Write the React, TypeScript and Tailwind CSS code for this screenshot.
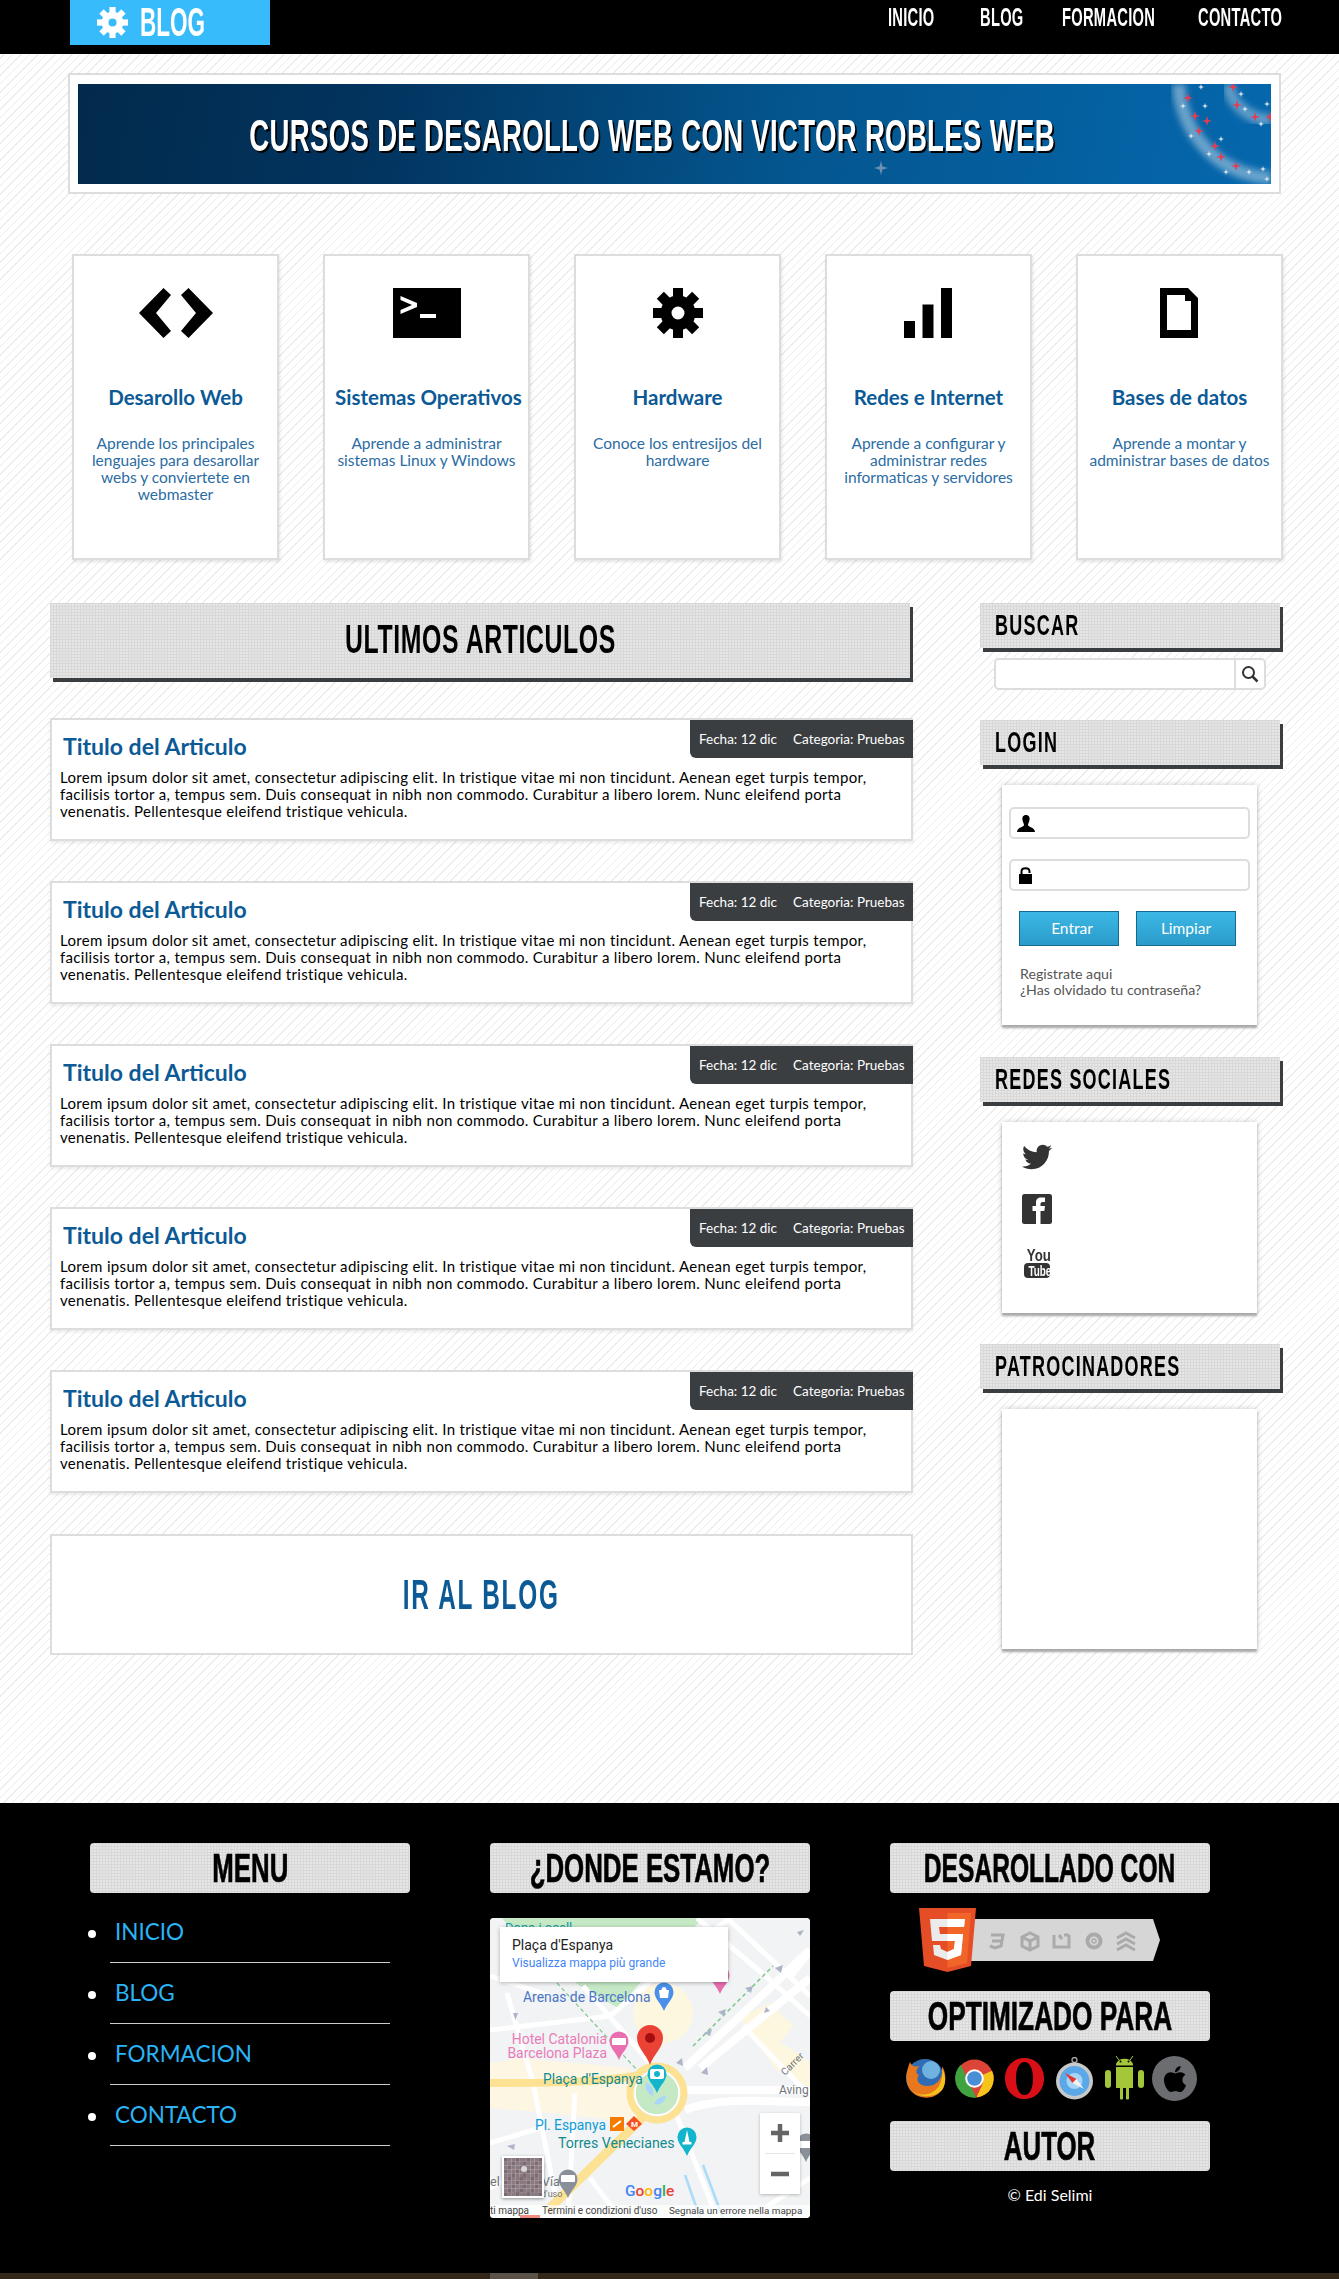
import React from 'react';
import { FaTwitter, FaApple } from 'react-icons/fa';

const bebas = "[font-family:'Liberation_Sans',sans-serif] font-bold";
const dots = 'bg-[#e6e6e6] bg-[linear-gradient(#d8d8d8_1px,transparent_1px),linear-gradient(90deg,#d8d8d8_1px,transparent_1px)] bg-[size:3px_3px]';
const lorem = 'Lorem ipsum dolor sit amet, consectetur adipiscing elit. In tristique vitae mi non tincidunt. Aenean eget turpis tempor, facilisis tortor a, tempus sem. Duis consequat in nibh non commodo. Curabitur a libero lorem. Nunc eleifend porta venenatis. Pellentesque eleifend tristique vehicula.';

const Gear = ({ size, color }: { size: number; color: string }) => (
  <svg width={size} height={size} viewBox="0 0 50 50">
    <circle cx="25" cy="25" r="12" fill="none" stroke={color} strokeWidth="11" />
    {[0, 45, 90, 135, 180, 225, 270, 315].map((a) => (
      <rect key={a} x="20" y="0" width="10" height="10" fill={color} transform={`rotate(${a} 25 25)`} />
    ))}
  </svg>
);

const CodeIcon = () => (
  <svg width="74" height="50" viewBox="0 0 74 50">
    <polygon points="0,25 24.5,0 32,7 17,25 32,43 24.5,50" />
    <polygon points="74,25 49.5,0 42,7 57,25 42,43 49.5,50" />
  </svg>
);

const TerminalIcon = () => (
  <svg width="68" height="50" viewBox="0 0 68 50">
    <rect width="68" height="50" />
    <polygon points="7.5,8 24,15 24,19 7.5,26 7.5,22 19,17 7.5,12" fill="#fff" />
    <rect x="27" y="26" width="16" height="4" fill="#fff" />
  </svg>
);

const SignalIcon = () => (
  <svg width="50" height="50" viewBox="0 0 50 50">
    <rect x="0" y="33" width="11" height="17" />
    <rect x="18.5" y="16.5" width="11" height="33.5" />
    <rect x="37" y="0" width="11" height="50" />
  </svg>
);

const FileIcon = () => (
  <svg width="40" height="50" viewBox="0 0 40 50">
    <path fillRule="evenodd" d="M0 0H28L38 10V50H0ZM7 7V42H31V13H25V7Z" />
  </svg>
);

const topics = [
  { title: 'Desarollo Web', text: 'Aprende los principales lenguajes para desarollar webs y conviertete en webmaster', icon: <CodeIcon /> },
  { title: 'Sistemas Operativos', text: 'Aprende a administrar sistemas Linux y Windows', icon: <TerminalIcon /> },
  { title: 'Hardware', text: 'Conoce los entresijos del hardware', icon: <Gear size={50} color="#000" /> },
  { title: 'Redes e Internet', text: 'Aprende a configurar y administrar redes informaticas y servidores', icon: <SignalIcon /> },
  { title: 'Bases de datos', text: 'Aprende a montar y administrar bases de datos', icon: <FileIcon /> },
];

const SideTitle = ({ children, className = '' }: { children: React.ReactNode; className?: string }) => (
  <div className={`${dots} ${bebas} h-[45px] w-[300px] pl-[15px] text-[29px] leading-[45px] tracking-[2px] text-black shadow-[3px_4px_0_#3b3e41] ${className}`}>
    <span className="inline-block origin-left scale-x-[0.62] whitespace-nowrap">{children}</span>
  </div>
);

const FootTitle = ({ children, className = '', squeeze = 'scale-x-[0.63]' }: { children: React.ReactNode; className?: string; squeeze?: string }) => (
  <div className={`${dots} ${bebas} flex h-[50px] w-[320px] justify-center rounded text-[41px] leading-[50px] text-black [-webkit-text-stroke:0.7px_#000] ${className}`}>
    <span className={`shrink-0 whitespace-nowrap ${squeeze}`}>{children}</span>
  </div>
);

const Article = () => (
  <div className="relative mt-10 h-[123px] w-[863px] border-2 border-[#ddd] bg-white pl-2 shadow-[0_2px_3px_rgba(0,0,0,0.08)]">
    <div className="absolute right-[-2px] top-0 flex h-[38px] w-[223px] items-center gap-[16px] rounded-bl-md bg-[#3b3e41] pl-[9px] text-[13.5px] text-white">
      <span>Fecha: 12 dic</span>
      <span>Categoria: Pruebas</span>
    </div>
    <h2 className="pl-[3px] pt-[12px] text-[23px] font-bold leading-[28px] text-[#0b5a96]">Titulo del Articulo</h2>
    <p className="mt-[9px] w-[825px] text-[15px] leading-[17px] tracking-[0.33px] text-black">{lorem}</p>
  </div>
);

const Banner = () => (
  <div className="relative h-[100px] overflow-hidden bg-[linear-gradient(100deg,#022a4c_0%,#02345f_25%,#04568f_60%,#0567ad_100%)]">
    <svg className="absolute right-0 top-0" width="100" height="100" viewBox="0 0 100 100">
      <defs>
        <filter id="glow"><feGaussianBlur stdDeviation="3" /></filter>
      </defs>
      <path d="M8 0C8 40 40 90 100 94" fill="none" stroke="#fff" strokeOpacity="0.4" strokeWidth="13" filter="url(#glow)" />
      <path d="M58 0C58 20 80 36 100 36" fill="none" stroke="#fff" strokeOpacity="0.35" strokeWidth="12" filter="url(#glow)" />
      {[[17, 14], [24, 32], [36, 37], [28, 47], [44, 62], [50, 73], [65, 82], [62, 3], [66, 21], [84, 33], [99, 33]].map(([x, y], i) => (
        <path key={i} d={`M${x} ${y - 5}L${x + 1.1} ${y - 1.1}L${x + 5} ${y}L${x + 1.1} ${y + 1.1}L${x} ${y + 5}L${x - 1.1} ${y + 1.1}L${x - 5} ${y}L${x - 1.1} ${y - 1.1}Z`} fill="#e83a52" />
      ))}
      {[[30, 3], [12, 22], [34, 22], [20, 52], [50, 55], [38, 70], [55, 88], [78, 88], [92, 85], [96, 95], [70, 10], [74, 25], [90, 40], [96, 20]].map(([x, y], i) => (
        <path key={i} d={`M${x} ${y - 3}L${x + 0.7} ${y - 0.7}L${x + 3} ${y}L${x + 0.7} ${y + 0.7}L${x} ${y + 3}L${x - 0.7} ${y + 0.7}L${x - 3} ${y}L${x - 0.7} ${y - 0.7}Z`} fill="#dfe8f2" />
      ))}
    </svg>
    <svg className="absolute left-[796px] top-[77px]" width="14" height="14" viewBox="0 0 14 14">
      <path d="M7 0L8.5 5.5L14 7L8.5 8.5L7 14L5.5 8.5L0 7L5.5 5.5Z" fill="#6f8fb2" />
    </svg>
    <div className={`${bebas} relative flex h-full items-center justify-center pr-[44px] pt-[4px] text-[45px] tracking-[0.5px] text-white`}>
      <span className="shrink-0 scale-x-[0.613] whitespace-nowrap [text-shadow:3px_2px_0_#000]">CURSOS DE DESAROLLO WEB CON VICTOR ROBLES WEB</span>
    </div>
  </div>
);

const Pin = ({ x, y, color, r = 9.5 }: { x: number; y: number; color: string; r?: number }) => (
  <path d={`M${x} ${y}C${x - 3} ${y - 8} ${x - r} ${y - 12} ${x - r} ${y - 19}A${r} ${r} 0 1 1 ${x + r} ${y - 19}C${x + r} ${y - 12} ${x + 3} ${y - 8} ${x} ${y}Z`} fill={color} />
);

const MapBase = () => (
  <svg width="320" height="300" viewBox="0 0 320 300" className="block [font-family:'Roboto',sans-serif]">
    <rect width="320" height="300" fill="#f1f3f4" />
    <polygon points="12,0 213,0 175,40 150,65 128,90 90,68 30,20" fill="#c5e8c5" />
    <circle cx="173" cy="95" r="30" fill="#fef7e0" />
    <polygon points="250,100 280,85 303,108 290,125 300,130 320,145 320,170 285,150" fill="#fef7e0" />
    <polygon points="0,145 30,140 140,150 150,205 60,195 0,190" fill="#fdf6e3" />
    <g fill="none" stroke="#fff" strokeWidth="5">
      <path d="M207 0L280 62L320 98" />
      <path d="M237 0L320 78" />
      <path d="M0 58L60 78" />
      <path d="M17 75L43 165L70 300" />
      <path d="M93 68L160 145" />
      <path d="M0 112L120 98L200 30L240 0" />
      <path d="M253 108L320 178" />
      <path d="M187 198L227 300" />
      <path d="M0 225L50 210" />
      <path d="M0 270L60 240" />
      <path d="M85 175L78 300" />
      <path d="M130 300L100 260" />
      <path d="M260 300L320 260" />
      <path d="M300 60L320 35" />
    </g>
    <g fill="none" stroke="#fff" strokeWidth="8">
      <path d="M195 150L320 32" />
      <path d="M210 150L320 60" />
      <path d="M195 172H320" />
      <path d="M195 192C230 178 280 184 320 184" />
    </g>
    <path d="M203 128L283 48" fill="none" stroke="#7cc68a" strokeWidth="1.5" strokeDasharray="4 3" />
    <path d="M67 65L147 152" fill="none" stroke="#7cc68a" strokeWidth="1.2" strokeDasharray="4 3" />
    <g stroke="#fde293" fill="none" strokeLinecap="round">
      <path d="M0 165C50 165 100 165 145 158" strokeWidth="8" />
      <path d="M150 202L60 290" strokeWidth="9" />
      <circle cx="167" cy="175" r="27" strokeWidth="7" />
    </g>
    <circle cx="167" cy="175" r="22" fill="#c5e8c5" stroke="#fff" strokeWidth="1.5" />
    <path d="M156 165C162 166 164 172 163 178C158 176 155 171 156 165ZM176 178C172 178 166 181 164 186C170 188 175 184 176 178Z" fill="#a8d5fb" />
    <path d="M195 257L210 300M213 247L233 300" stroke="#aadafc" strokeWidth="2.5" />
    <g fill="#aeb4c8">
      <polygon points="23,95 28,95 25.5,102" />
      <polygon points="285,50 293,47 291,55" />
      <polygon points="307,14 314,12 310,18" />
      <polygon points="255,70 263,68 261,75" />
      <polygon points="228,94 236,91 234,98" />
      <polygon points="214,115 222,111 220,118" />
      <polygon points="280,93 274,95 276,89" />
      <polygon points="186,145 192,140 193,148" />
      <polygon points="211,155 217,149 218,157" />
      <polygon points="17,228 25,226 24,232" />
    </g>
    <text x="15" y="14" fontSize="13" fill="#129aa0">Dona i ocell</text>
    <Pin x={230} y={76} color="#e96fb0" />
    <Pin x={174} y={93} color="#4a90e8" />
    <path d="M169 72H179L178 80H170ZM171.5 72C171.5 68 176.5 68 176.5 72" fill="#fff" />
    <text x="33" y="84" fontSize="13.9" fill="#4a76c8">Arenas de Barcelona</text>
    <Pin x={129} y={142} color="#e96fb0" />
    <rect x="122" y="120" width="14" height="7" rx="1" fill="#fff" />
    <text x="117" y="126" fontSize="13.9" textAnchor="end" fill="#ea7bb8">Hotel Catalonia</text>
    <text x="117" y="140" fontSize="13.9" textAnchor="end" fill="#ea7bb8">Barcelona Plaza</text>
    <path d="M160 147C157 137 147 130 147 120A13 13 0 1 1 173 120C173 130 163 137 160 147Z" fill="#ea4335" />
    <circle cx="160" cy="120" r="5" fill="#a50e0e" />
    <Pin x={167} y={175} color="#12b5cb" />
    <rect x="160" y="151" width="14" height="10" rx="2" fill="#fff" />
    <circle cx="167" cy="156" r="3" fill="#12b5cb" />
    <text x="53" y="166" fontSize="13.8" fill="#128a8f">Plaça d'Espanya</text>
    <text x="45" y="212" fontSize="13.8" fill="#0f9bd8">Pl. Espanya</text>
    <rect x="120" y="199" width="14" height="14" fill="#f57c00" />
    <path d="M123 209L131 203" stroke="#fff" strokeWidth="2" />
    <polygon points="144,198 152,206 144,213 136,206" fill="#f4511e" />
    <text x="141" y="209" fontSize="8" fontWeight="700" fill="#fff">M</text>
    <text x="68" y="230" fontSize="14.2" fill="#128a8f">Torres Venecianes</text>
    <Pin x={197} y={238} color="#12b5cb" />
    <path d="M197 212L199.5 224H194.5Z" fill="#fff" />
    <rect x="192.5" y="224" width="9" height="2.5" fill="#fff" />
    <text x="289" y="176" fontSize="12" fill="#70757a">Aving</text>
    <text x="295" y="158" fontSize="10" fill="#70757a" transform="rotate(-45 295 158)">Carrer</text>
    <Pin x={78} y={280} color="#8a9099" />
    <rect x="71" y="257" width="14" height="7" rx="1" fill="#fff" />
    <text x="0" y="268" fontSize="12.5" fill="#70757a">el</text>
    <text x="52" y="268" fontSize="12.5" fill="#70757a">Vía</text>
    <text x="18" y="279" fontSize="9" fill="#70757a">omento d'uso</text>
    <Pin x={316} y={244} color="#8a9099" />
    <rect x="310" y="223" width="10" height="7" fill="#fff" />
    <text x="135" y="278" fontSize="15.5" fontWeight="500">
      <tspan fill="#4285f4">G</tspan><tspan fill="#ea4335">o</tspan><tspan fill="#fbbc05">o</tspan><tspan fill="#4285f4">g</tspan><tspan fill="#34a853">l</tspan><tspan fill="#ea4335">e</tspan>
    </text>
    <rect y="287" width="320" height="13" fill="#fff" fillOpacity="0.7" />
    <rect x="30" y="297" width="20" height="3" fill="#f28b82" />
    <text x="0" y="296" fontSize="10" fill="#444">ti mappa</text>
    <text x="52" y="296" fontSize="10" fill="#444">Termini e condizioni d'uso</text>
    <text x="179" y="296" fontSize="9.9" fill="#444">Segnala un errore nella mappa</text>
  </svg>
);

const satellite = ['#7b6a72', '#5d5560', '#9a8c90', '#4f4a52', '#8a7a80', '#a59aa0'];

const MapBox = () => (
  <div className="relative mt-[25px] h-[300px] w-[320px] overflow-hidden rounded bg-[#f1f3f4]">
    <MapBase />
    <div className="absolute left-[10px] top-[9px] h-[55px] w-[228px] bg-white pl-3 pt-[8px] shadow-[0_1px_4px_rgba(0,0,0,0.3)] [font-family:'Roboto',sans-serif]">
      <div className="text-[14px] leading-[20px] text-[#222]">Plaça d'Espanya</div>
      <div className="text-[12px] leading-[16px] text-[#4285f4]">Visualizza mappa più grande</div>
    </div>
    <div className="absolute left-[270px] top-[195px] h-[81px] w-[40px] bg-white shadow-[0_1px_3px_rgba(0,0,0,0.25)]">
      <svg width="40" height="81" viewBox="0 0 40 81">
        <path d="M11 20H29M20 11V29M11 61H29" stroke="#666" strokeWidth="4.5" />
        <path d="M5 40.5H35" stroke="#e6e6e6" />
      </svg>
    </div>
    <div className="absolute left-[12px] top-[238px] border-2 border-white shadow-[0_1px_3px_rgba(0,0,0,0.4)]">
      <svg width="38" height="38" viewBox="0 0 38 38" className="block">
        {Array.from({ length: 100 }).map((_, i) => (
          <rect key={i} x={(i % 10) * 3.8} y={Math.floor(i / 10) * 3.8} width="3.8" height="3.8" fill={satellite[(i * i + 3 * i) % 6]} />
        ))}
        <circle cx="20" cy="11" r="3" fill="#d8d8d8" />
      </svg>
    </div>
  </div>
);

const Html5Badge = () => (
  <svg width="241" height="64" viewBox="0 0 241 64" className="ml-[29px] mt-[15px] block">
    <polygon points="50,11 234,11 241,32 234,53 50,53" fill="#d6d6d6" />
    <polygon points="0,0 57,0 52,58 28.5,64 5,58" fill="#e44d26" />
    <polygon points="28.5,5 52,5 48,55 28.5,60" fill="#f16529" />
    <polygon points="11,11 46,11 45,19 20,19 21,26 44,26 42,47 28.5,52 15,47 14,37 21,37 22,41 28.5,44 35,41 36,33 13,33" fill="#ebebeb" />
    <polygon points="28.5,11 46,11 45,19 28.5,19 28.5,26 44,26 42,47 28.5,52 28.5,44 35,41 36,33 28.5,33" fill="#fff" />
    <g fill="none" stroke="#aaa" strokeWidth="3">
      <path d="M72 27H84L82 38L76 40L71 38M73 33H82" />
      <path d="M103 29L111 25L119 29V38L111 42L103 38ZM103 29L111 33L119 29M111 33V42" />
      <path d="M135 27V39H150V27M140 27L143 31M150 27H145" />
      <circle cx="175" cy="33" r="6.5" strokeWidth="4" />
      <circle cx="175" cy="33" r="2" strokeWidth="1.5" />
      <path d="M198 30L207 25L216 30M198 36L207 31L216 36M198 42L207 37L216 42" />
    </g>
  </svg>
);

const BrowserIcons = () => (
  <div className="mt-[15px] flex items-center pl-[13px]">
    <svg width="43" height="41" viewBox="0 0 43 41">
      <circle cx="22" cy="20" r="19" fill="#2f6cb4" />
      <circle cx="28" cy="12" r="9" fill="#6fb2e0" />
      <path d="M7 4C4 12 1 20 6 30C12 41 30 44 39 32C44 24 43 14 39 8C41 20 34 28 24 28C16 28 12 22 16 17C11 15 14 10 17 8C12 9 9 9 7 4Z" fill="#e8771d" />
      <path d="M39 32C30 41 14 40 6 30C12 38 28 40 36 28C39 22 40 16 39 10C43 18 43 26 39 32Z" fill="#f4c21f" />
    </svg>
    <svg width="39" height="39" viewBox="-20 -20 40 40" className="ml-[9px]">
      <circle r="19.5" fill="#db4437" />
      <path d="M-17 10A19.5 19.5 0 0 1 -14 -14L-6 4L2 19.5A19.5 19.5 0 0 1 -17 10Z" fill="#3fa43f" />
      <path d="M0 -0 L18 -8A19.5 19.5 0 0 1 2 19.5L9 4Z" fill="#f6c51b" />
      <circle r="9.5" fill="#fff" />
      <circle r="7.5" fill="#4a8fd6" />
    </svg>
    <svg width="39" height="41" viewBox="0 0 39 41" className="ml-[11px]">
      <path fillRule="evenodd" d="M19.5 0C31 0 39 9 39 20.5S31 41 19.5 41S0 32 0 20.5S8 0 19.5 0ZM19.5 4C14 4 11 11 11 20.5S14 37 19.5 37S28 30 28 20.5S25 4 19.5 4Z" fill="#d90f18" />
    </svg>
    <svg width="37" height="43" viewBox="0 0 37 43" className="ml-[12px]">
      <circle cx="18.5" cy="3" r="2.5" fill="none" stroke="#aaa" strokeWidth="1.3" />
      <circle cx="18.5" cy="24" r="18.5" fill="#c9c9c9" />
      <circle cx="18.5" cy="24" r="15" fill="#5ba8e8" />
      <circle cx="18.5" cy="24" r="8" fill="#a9d5f5" />
      <polygon points="9,16 20.5,22 16.5,26" fill="#e2362f" />
      <polygon points="28,32 20.5,22 16.5,26" fill="#f2f2f2" />
    </svg>
    <svg width="39" height="45" viewBox="0 0 39 45" className="ml-[12px]" fill="#a4c639">
      <path d="M11 8A9 8 0 0 1 28 8V9.5H11ZM11 11H28V32H24V43A2.5 2.5 0 0 1 21 43V32H18V43A2.5 2.5 0 0 1 15 43V32H11Z" />
      <rect x="0" y="14" width="6" height="18" rx="3" />
      <rect x="33" y="14" width="6" height="18" rx="3" />
      <path d="M11 0L14 4M28 0L25 4" stroke="#a4c639" strokeWidth="1" />
      <circle cx="15.5" cy="5.5" r="1" fill="#000" />
      <circle cx="23.5" cy="5.5" r="1" fill="#000" />
    </svg>
    <div className="ml-2 flex h-[45px] w-[45px] items-center justify-center rounded-full bg-[#6b6d70] text-black">
      <FaApple size={30} />
    </div>
  </div>
);

const menu = ['INICIO', 'BLOG', 'FORMACION', 'CONTACTO'];
const cardShadow = 'shadow-[0_3px_2px_#aaa,0_0_6px_rgba(0,0,0,0.2)]';

export default function App() {
  return (
    <div className="min-h-[2279px] bg-white bg-[repeating-linear-gradient(135deg,#fff_0,#fff_5px,#ececec_5px,#ececec_6px)] [font-family:'Lato','Noto_Sans',sans-serif]">
      <header className="flex h-[54px] justify-between bg-black pl-[70px] pr-[61px]">
        <div className="flex h-[45px] w-[200px] items-center bg-[#38bbfb] pl-[27px]">
          <Gear size={31} color="#fff" />
          <span className={`${bebas} ml-[12px] origin-left scale-x-[0.55] whitespace-nowrap text-[41px] leading-none text-white`}>BLOG</span>
        </div>
        <nav className={`${bebas} flex h-[35px] items-center text-[26px] tracking-[0.5px] text-white`}>
          <a className="w-[92px] origin-left scale-x-[0.565] whitespace-nowrap">INICIO</a>
          <a className="w-[82px] origin-left scale-x-[0.565] whitespace-nowrap">BLOG</a>
          <a className="w-[136px] origin-left scale-x-[0.565] whitespace-nowrap">FORMACION</a>
          <a className="w-[80px] origin-left scale-x-[0.565] whitespace-nowrap">CONTACTO</a>
        </nav>
      </header>

      <div className="ml-[68px] mt-[19px] h-[121px] w-[1213px] border-2 border-[#ddd] bg-white px-2 pt-[9px]">
        <Banner />
      </div>

      <div className="ml-[72px] mt-[60px] flex gap-[44px]">
        {topics.map((t) => (
          <div key={t.title} className="h-[306px] w-[207px] border-2 border-[#ddd] bg-white px-[10px] pt-[32px] text-center shadow-[1px_2px_3px_rgba(0,0,0,0.1)]">
            <div className="flex h-[50px] items-center justify-center">{t.icon}</div>
            <h3 className="mt-[45px] whitespace-nowrap text-[20.5px] font-bold leading-[28px] text-[#0b5a96]">{t.title}</h3>
            <p className="mt-[24px] text-[15.5px] leading-[17px] text-[#2b6ca3]">{t.text}</p>
          </div>
        ))}
      </div>

      <div className="ml-[50px] mt-[43px] flex items-start">
        <div className="w-[863px]">
          <div className={`${dots} ${bebas} flex h-[75px] w-[860px] justify-center pb-[2px] text-[40px] leading-[73px] tracking-[1px] text-black shadow-[3px_4px_0_#3b3e41]`}>
            <span className="shrink-0 scale-x-[0.62] whitespace-nowrap">ULTIMOS ARTICULOS</span>
          </div>
          <Article />
          <Article />
          <Article />
          <Article />
          <Article />
          <div className={`${bebas} mt-[41px] flex h-[121px] w-[863px] justify-center border-2 border-[#ddd] bg-white text-[42px] leading-[117px] tracking-[3px] text-[#0b5a96]`}>
            <span className="shrink-0 scale-x-[0.58] whitespace-nowrap">IR AL BLOG</span>
          </div>
        </div>

        <aside className="ml-[67px] w-[303px]">
          <SideTitle>BUSCAR</SideTitle>
          <div className="ml-[14px] mt-[10px] flex h-[32px] w-[272px] justify-end rounded-[5px] border-2 border-[#ddd] bg-white">
            <div className="flex w-[30px] items-center justify-center border-l-2 border-[#ddd]">
              <svg width="18" height="18" viewBox="0 0 18 18" fill="none" stroke="#333">
                <circle cx="7.5" cy="7.5" r="5.5" strokeWidth="2" />
                <path d="M11.5 11.5L16.5 16.5" strokeWidth="2.5" />
              </svg>
            </div>
          </div>

          <SideTitle className="mt-[30px]">LOGIN</SideTitle>
          <div className={`ml-[22px] mt-[20px] h-[240px] w-[255px] bg-white pl-[7px] pt-[22px] ${cardShadow}`}>
            <div className="flex h-[32px] w-[241px] items-center rounded-[5px] border-2 border-[#ddd] pl-[6px]">
              <svg width="18" height="17" viewBox="0 0 18 17">
                <path d="M9 0C12 0 13 2.5 12.5 5C12 7.5 11 8.5 11 10C11 12 18 12.5 18 17H0C0 12.5 7 12 7 10C7 8.5 6 7.5 5.5 5C5 2.5 6 0 9 0Z" />
              </svg>
            </div>
            <div className="mt-[20px] flex h-[32px] w-[241px] items-center rounded-[5px] border-2 border-[#ddd] pl-[8px]">
              <svg width="13" height="17" viewBox="0 0 13 17">
                <path d="M0 7H13V17H0Z" />
                <path d="M2.5 7V4.5C2.5 0 10.5 0 10.5 4.5V6" fill="none" stroke="#000" strokeWidth="2" />
              </svg>
            </div>
            <div className="ml-[10px] mt-[20px] flex gap-[17px]">
              <button className="h-[35px] w-[100px] border border-[#15698f] bg-[linear-gradient(#3cb8e6,#2a9bc9)] pl-[6px] text-[15.5px] text-white">Entrar</button>
              <button className="h-[35px] w-[100px] border border-[#15698f] bg-[linear-gradient(#3cb8e6,#2a9bc9)] text-[15.5px] text-white">Limpiar</button>
            </div>
            <div className="ml-[11px] mt-[20px] text-[14.2px] leading-[16px] text-[#555]">
              <div>Registrate aqui</div>
              <div>¿Has olvidado tu contraseña?</div>
            </div>
          </div>

          <SideTitle className="mt-[32px]">REDES SOCIALES</SideTitle>
          <div className={`ml-[22px] mt-[20px] h-[191px] w-[255px] bg-white pl-[20px] pt-[20px] text-[#333] ${cardShadow}`}>
            <FaTwitter size={30} />
            <svg width="30" height="30" viewBox="0 0 30 30" className="mt-[22px]">
              <rect width="30" height="30" rx="2.5" fill="#333" />
              <path d="M14 30V17H10.5V12H14V8.5C14 5 16 3.5 19 3.5H23V8H20.5C19 8 18.5 9 18.5 10V12H23L22.3 17H18.5V30Z" fill="#fff" />
            </svg>
            <div className={`${bebas} ml-[2px] mt-[24px] w-[26px] text-center`}>
              <div className="scale-x-[0.78] text-[17px] leading-[15px]">You</div>
              <div className="rounded-[4px] bg-[#333] text-[15px] leading-[15px] text-white">
                <div className="scale-x-[0.66]">Tube</div>
              </div>
            </div>
          </div>

          <SideTitle className="mt-[31px]">PATROCINADORES</SideTitle>
          <div className={`ml-[22px] mt-[20px] h-[240px] w-[255px] bg-white ${cardShadow}`} />
        </aside>
      </div>

      <footer className="absolute left-0 top-[1803px] h-[476px] w-full bg-black">
        <div className="flex h-[470px] gap-[80px] pl-[90px] pt-[40px]">
          <div className="w-[320px]">
            <FootTitle>MENU</FootTitle>
            <ul className="mt-[9px]">
              {menu.map((m) => (
                <li key={m} className="relative ml-[20px] h-[61px] w-[280px] border-b border-[#ccc] pl-[5px] pt-[14px] text-[22.5px] leading-[32px] text-[#2ab4f5]">
                  <span className="absolute left-[-22px] top-[28px] h-[8px] w-[8px] rounded-full bg-white" />
                  {m}
                </li>
              ))}
            </ul>
          </div>
          <div className="w-[320px]">
            <FootTitle>¿DONDE ESTAMO?</FootTitle>
            <MapBox />
          </div>
          <div className="w-[320px]">
            <FootTitle squeeze="scale-x-[0.6]">DESAROLLADO CON</FootTitle>
            <Html5Badge />
            <FootTitle className="mt-[19px]" squeeze="scale-x-[0.64]">OPTIMIZADO PARA</FootTitle>
            <BrowserIcons />
            <FootTitle className="mt-[20px]">AUTOR</FootTitle>
            <div className="mt-[15px] text-center text-[16px] leading-[18px] text-white">© Edi Selimi</div>
          </div>
        </div>
        <div className="flex h-[6px] bg-[#33271a] pl-[490px]">
          <div className="h-full w-[48px] bg-[#5a5247]" />
        </div>
      </footer>
    </div>
  );
}
